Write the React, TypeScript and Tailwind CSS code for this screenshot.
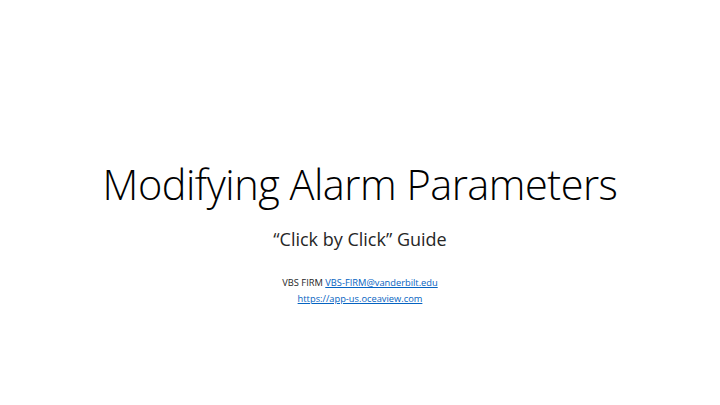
export default function App() {
  return (
    <div
      className="w-[720px] h-[405px] bg-white flex flex-col items-center text-black"
      style={{ fontFamily: '"Open Sans", "Liberation Sans", sans-serif' }}
    >
      {/* Title */}
      <h1 className="mt-[158px] text-[41.5px] font-light leading-[52px] tracking-[-0.5px]">
        Modifying Alarm Parameters
      </h1>

      {/* Subtitle */}
      <div className="mt-[17px] text-[18px] leading-[24px] font-normal text-[#262626]">
        “Click by Click” Guide
      </div>

      {/* Contact */}
      <div className="mt-[24px] flex flex-col items-center text-[9.3px] leading-[16px] text-[#262626]">
        <div>
          VBS FIRM{' '}
          <a href="#" className="text-[#0563c1] underline">
            VBS-FIRM@vanderbilt.edu
          </a>
        </div>
        <a href="#" className="text-[#0563c1] underline">
          https://app-us.oceaview.com
        </a>
      </div>
    </div>
  );
}
